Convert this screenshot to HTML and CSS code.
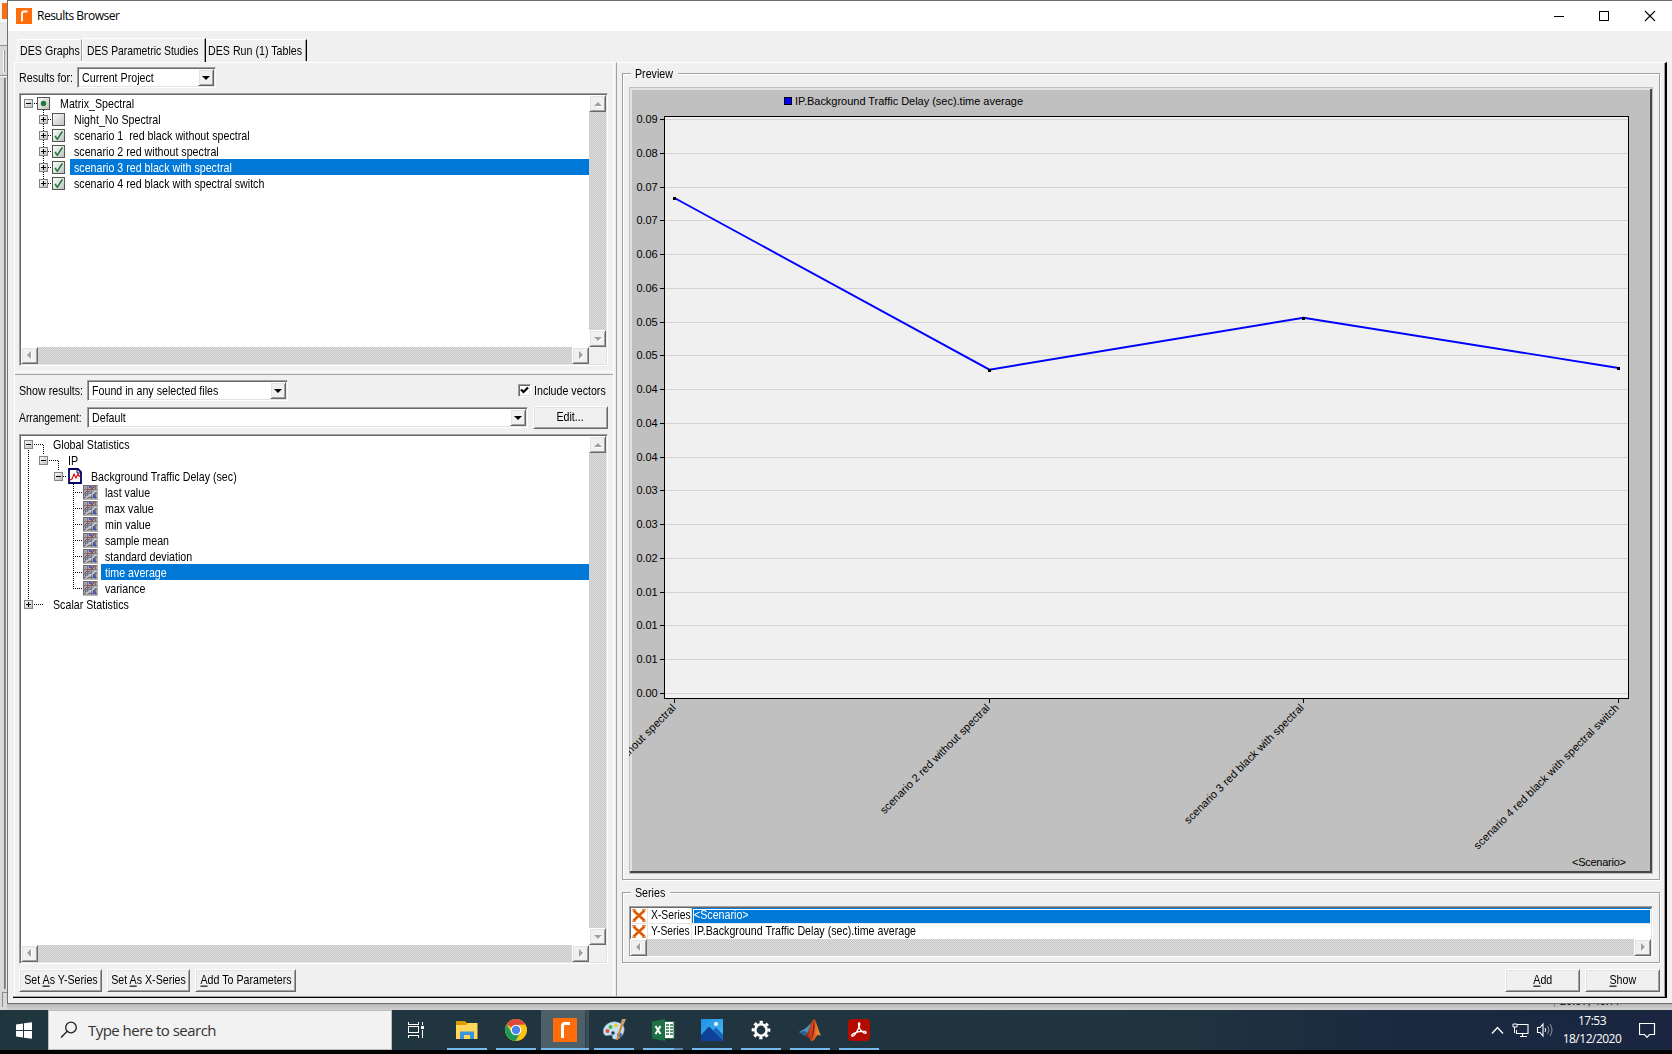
FILE: index.html
```html
<!DOCTYPE html>
<html lang="en">
<head>
<meta charset="utf-8">
<title>Results Browser</title>
<link rel="stylesheet" href="styles.css">
</head>
<body>
<svg class="defs" width="0" height="0">
  <defs>
    <linearGradient id="knob" x1="0" y1="0" x2="1" y2="1"><stop offset="0" stop-color="#fff"/><stop offset="1" stop-color="#bdbdbd"/></linearGradient>
    <linearGradient id="sky" x1="0" y1="0" x2="1" y2="1"><stop offset="0" stop-color="#1f8fe6"/><stop offset="1" stop-color="#46c0f5"/></linearGradient>
    <linearGradient id="flame" x1="0" y1="0" x2="1" y2="0"><stop offset="0" stop-color="#8a1d12"/><stop offset=".5" stop-color="#d9531e"/><stop offset="1" stop-color="#f7a13c"/></linearGradient>
    <g id="minus"><rect x=".5" y=".5" width="8" height="8" fill="url(#knob)" stroke="#848484"/><path d="M2 4.5h5" stroke="#000"/></g>
    <g id="plus"><use href="#minus"/><path d="M4.500 2v5" stroke="#000"/></g>
    <g id="box"><rect x=".5" y=".5" width="12" height="12" fill="url(#knob)" stroke="#555"/></g>
    <g id="checked"><use href="#box"/><path d="M3 7l2.300 3.200L10.300 2.500" fill="none" stroke="#1e7a3c" stroke-width="1.500"/></g>
    <g id="stat">
      <rect width="15" height="15" fill="#a3a3a8"/><path d="M0 .5h15M.5 0v15" stroke="#707070"/>
      <path d="M0 4.500h14M0 8.500h14M0 12.500h14M4.500 0v14M8.500 0v14M12.500 0v14" stroke="#74747c"/>
      <path d="M3 13L7 10L10 9L13 5" stroke="#c6c6c6" stroke-width="1.600" fill="none"/>
      <path d="M2 8L5 5L8 4L12 1" stroke="#a8444c" stroke-width="1.100" fill="none"/>
      <path d="M2 11L3 9M5 7L7 6M9 3L10 2M6 2h2M10 12h3M11 9v3" stroke="#5656b4" stroke-width="1.100"/>
      <path d="M0 14.500h15M14.500 0v15" stroke="#b4b4b4"/>
    </g>
    <g id="cross"><path d="M1.500 1.500L12.500 11.500M12.500 1.500L1.500 11.500" stroke="#e05a00" stroke-width="2.600"/><path d="M0 .8h4M10 .8h4M0 12.200h4M10 12.200h4" stroke="#e05a00" stroke-width="1"/></g>
  </defs>
</svg>
<div class="desktop">
  <div class="workspace">
    <svg class="behind" width="7" height="1010" viewBox="0 0 7 1010" shape-rendering="crispEdges">
      <rect width="7" height="1010" fill="#d8d8d8"/><rect width="7" height="22" fill="#f6f6f6"/><rect y="22" width="7" height="23" fill="#e9e9e9"/>
      <rect x="2" y="3" width="5" height="16" fill="#ff6d0a"/>
      <path d="M0 45.500h7M0 75.500h7M5.500 78v911" stroke="#8c8c8c"/><path d="M4.500 78v911" stroke="#777"/><path d="M0 76.500h7M3.500 50v22" stroke="#fafafa"/><path d="M4.500 50v22" stroke="#999"/>
      <path d="M2.500 1007V992.500H7" stroke="#8c8c8c" fill="none"/><rect x="6" y="79" width="1" height="910" fill="#eee"/>
    </svg>
    <div class="window">
      <div class="titlebar">
        <svg width="16" height="16" viewBox="0 0 16 16"><rect width="16" height="16" fill="#ff6d0a"/><path d="M6 13.500V5.500q0-2 2-2h3.500" fill="none" stroke="#fff" stroke-width="1.900"/></svg>
        <span class="title">Results Browser</span>
        <svg class="winbtns" width="103" height="12" viewBox="0 0 103 12"><path d="M0 6.500h10" stroke="#000" shape-rendering="crispEdges"/><rect x="45.500" y="1.500" width="9" height="9" fill="none" stroke="#000"/><path d="M91 1l10 10M101 1L91 11" stroke="#000" stroke-width="1.100"/></svg>
      </div>
      <div class="tabs">
        <div class="tab tab-first"><span class="t">DES Graphs</span></div>
        <div class="tab tab-active"><span class="t">DES Parametric Studies</span></div>
        <div class="tab tab-last"><span class="t">DES Run (1) Tables</span></div>
      </div>
      <div class="panes">
        <div class="left">
          <section class="sources">
            <div class="row"><span class="t label-results">Results for:</span><div class="select sel-project"><span class="t">Current Project</span><b class="drop"></b></div></div>
            <div class="treebox tree-a">
              <div class="tree">
                <svg class="guides" width="49" height="100" viewBox="21 95 49 100" shape-rendering="crispEdges">
                  <path d="M34 103.500h4M43.500 110v74M48 119.500h4M48 135.500h4M48 151.500h4M48 167.500h4M48 183.500h4" stroke="#000" stroke-dasharray="1 1"/>
                  <use href="#minus" x="24" y="99"/><use href="#box" x="37" y="97"/><circle cx="43.500" cy="103.500" r="2.700" fill="#1e7a3c" shape-rendering="auto"/>
                  <use href="#plus" x="39" y="115"/><use href="#plus" x="39" y="131"/><use href="#plus" x="39" y="147"/><use href="#plus" x="39" y="163"/><use href="#plus" x="39" y="179"/>
                  <use href="#box" x="52" y="113"/>
                  <g shape-rendering="auto"><use href="#checked" x="52" y="129"/><use href="#checked" x="52" y="145"/><use href="#checked" x="52" y="161"/><use href="#checked" x="52" y="177"/></g>
                </svg>
                <div class="node lv-root"><span class="t">Matrix_Spectral</span></div>
                <div class="node lv-scn"><span class="t">Night_No Spectral</span></div>
                <div class="node lv-scn"><span class="t">scenario 1  red black without spectral</span></div>
                <div class="node lv-scn"><span class="t">scenario 2 red without spectral</span></div>
                <div class="node lv-scn selected"><span class="t">scenario 3 red black with spectral</span></div>
                <div class="node lv-scn"><span class="t">scenario 4 red black with spectral switch</span></div>
              </div>
              <div class="vbar"><b class="sb up"></b><b class="sb down"></b></div>
              <div class="hbar"><b class="sb prev"></b><b class="sb next"></b></div>
            </div>
          </section>
          <section class="results">
            <div class="row"><span class="t label-show">Show results:</span><div class="select sel-show"><span class="t">Found in any selected files</span><b class="drop"></b></div>
              <div class="check"><svg width="13" height="13" viewBox="0 0 13 13"><path d="M3 5.500L5.500 8L10 3.500" fill="none" stroke="#000" stroke-width="2.200"/></svg></div><span class="t">Include vectors</span></div>
            <div class="row row-arr"><span class="t label-show label-arr">Arrangement:</span><div class="select sel-arr"><span class="t">Default</span><b class="drop"></b></div><div class="btn btn-edit"><span class="t">Edit...</span></div></div>
            <div class="treebox tree-b">
              <div class="tree">
                <svg class="guides" width="79" height="180" viewBox="21 436 79 180" shape-rendering="crispEdges">
                  <path d="M28.500 450v150M34 444.500h10M43.500 445v10M49 460.500h10M58.500 461v10M63 476.500h4M73.500 484v105M75 492.500h8M75 508.500h8M75 524.500h8M75 540.500h8M75 556.500h8M75 572.500h8M75 588.500h8M34 604.500h10" stroke="#000" stroke-dasharray="1 1"/>
                  <use href="#minus" x="24" y="440"/><use href="#minus" x="39" y="456"/><use href="#minus" x="54" y="472"/><use href="#plus" x="24" y="600"/>
                  <g shape-rendering="auto"><path d="M69 469h9l3 3v11H69z" fill="#fff" stroke="#000060" stroke-width="1.800"/><path d="M77 469v4h4" fill="none" stroke="#000060"/><path d="M70 480l2-1l2-5l2 4l2-4l2 3" fill="none" stroke="#e00000" stroke-width="1.100"/></g>
                  <use href="#stat" x="83" y="485"/><use href="#stat" x="83" y="501"/><use href="#stat" x="83" y="517"/><use href="#stat" x="83" y="533"/><use href="#stat" x="83" y="549"/><use href="#stat" x="83" y="565"/><use href="#stat" x="83" y="581"/>
                </svg>
                <div class="node lv-0"><span class="t">Global Statistics</span></div>
                <div class="node lv-1"><span class="t">IP</span></div>
                <div class="node lv-2"><span class="t">Background Traffic Delay (sec)</span></div>
                <div class="node lv-3"><span class="t">last value</span></div>
                <div class="node lv-3"><span class="t">max value</span></div>
                <div class="node lv-3"><span class="t">min value</span></div>
                <div class="node lv-3"><span class="t">sample mean</span></div>
                <div class="node lv-3"><span class="t">standard deviation</span></div>
                <div class="node lv-3 selected"><span class="t">time average</span></div>
                <div class="node lv-3"><span class="t">variance</span></div>
                <div class="node lv-0"><span class="t">Scalar Statistics</span></div>
              </div>
              <div class="vbar"><b class="sb up"></b><b class="sb down"></b></div>
              <div class="hbar"><b class="sb prev"></b><b class="sb next"></b></div>
            </div>
            <div class="actions">
              <div class="btn b1"><span class="t">Set <u>A</u>s Y-Series</span></div>
              <div class="btn b1"><span class="t">Set <u>A</u>s X-Series</span></div>
              <div class="btn b2"><span class="t"><u>A</u>dd To Parameters</span></div>
            </div>
          </section>
        </div>
        <div class="right">
          <div class="group preview">
            <div class="legend"><span class="t">Preview</span></div>
            <svg class="chart" width="1024" height="787" viewBox="629 87 1024 787">
              <g shape-rendering="crispEdges">
                <rect x="629" y="87" width="1024" height="787" fill="#c0c0c0"/>
                <path d="M631 873V89h1020" fill="none" stroke="#e3e3e3" stroke-width="2"/>
                <path d="M630 872h1021V89" fill="none" stroke="#484848" stroke-width="2"/>
                <rect x="664.500" y="116.500" width="964" height="582" fill="#f0f0f0" stroke="#000"/>
                <path d="M665 119.500h963M665 153.500h963M665 187.500h963M665 220.500h963M665 254.500h963M665 288.500h963M665 322.500h963M665 355.500h963M665 389.500h963M665 423.500h963M665 457.500h963M665 490.500h963M665 524.500h963M665 558.500h963M665 592.500h963M665 625.500h963M665 659.500h963M665 693.500h963" stroke="#d3d3d3"/>
                <path d="M660 119.500h4M660 153.500h4M660 187.500h4M660 220.500h4M660 254.500h4M660 288.500h4M660 322.500h4M660 355.500h4M660 389.500h4M660 423.500h4M660 457.500h4M660 490.500h4M660 524.500h4M660 558.500h4M660 592.500h4M660 625.500h4M660 659.500h4M660 693.500h4M674.500 699v4M989.500 699v4M1303.500 699v4M1618.500 699v4" stroke="#000"/>
                <rect x="784.500" y="97.500" width="7" height="7" fill="#00f" stroke="#000"/>
              </g>
              <path d="M674.500 198L989.500 369.700L1303.500 317.700L1618.500 368" fill="none" stroke="#00f" stroke-width="1.900"/>
              <path d="M673 197h3v3h-3zM988 369h3v3h-3zM1302 317h3v3h-3zM1617 367h3v3h-3z" fill="#000"/>
              <text x="795" y="105" textLength="228">IP.Background Traffic Delay (sec).time average</text>
              <g class="ylabels">
                <text x="636.500" y="123">0.09</text><text x="636.500" y="157">0.08</text><text x="636.500" y="191">0.07</text><text x="636.500" y="224">0.07</text><text x="636.500" y="258">0.06</text><text x="636.500" y="292">0.06</text><text x="636.500" y="326">0.05</text><text x="636.500" y="359">0.05</text><text x="636.500" y="393">0.04</text><text x="636.500" y="427">0.04</text><text x="636.500" y="461">0.04</text><text x="636.500" y="494">0.03</text><text x="636.500" y="528">0.03</text><text x="636.500" y="562">0.02</text><text x="636.500" y="596">0.01</text><text x="636.500" y="629">0.01</text><text x="636.500" y="663">0.01</text><text x="636.500" y="697">0.00</text>
              </g>
              <g class="xlabels">
                <text transform="translate(676.500 708.500) rotate(-45)" textLength="184">scenario 1 red black without spectral</text>
                <text transform="translate(990.500 708.500) rotate(-45)" textLength="150">scenario 2 red without spectral</text>
                <text transform="translate(1304.500 708.500) rotate(-45)" textLength="164">scenario 3 red black with spectral</text>
                <text transform="translate(1619.500 708.500) rotate(-45)" textLength="200">scenario 4 red black with spectral switch</text>
              </g>
              <text x="1572" y="866" textLength="54">&lt;Scenario&gt;</text>
            </svg>
          </div>
          <div class="group series">
            <div class="legend"><span class="t">Series</span></div>
            <div class="list">
              <div class="item"><svg width="14" height="13" viewBox="0 0 14 13"><use href="#cross"/></svg><div class="name"><span class="t">X-Series</span></div><div class="value picked"><span class="t">&lt;Scenario&gt;</span></div></div>
              <div class="item"><svg width="14" height="13" viewBox="0 0 14 13"><use href="#cross"/></svg><div class="name"><span class="t">Y-Series</span></div><div class="value"><span class="t">IP.Background Traffic Delay (sec).time average</span></div></div>
              <div class="hbar"><b class="sb prev"></b><b class="sb next"></b></div>
            </div>
          </div>
          <div class="actions actions-right">
            <div class="btn b3"><span class="t"><u>A</u>dd</span></div>
            <div class="btn b3"><span class="t"><u>S</u>how</span></div>
          </div>
        </div>
      </div>
    </div>
    <div class="statusline"><span>20.97, 40.77</span></div>
  </div>
  <div class="taskbar">
    <div class="start"><svg width="16" height="17" viewBox="0 0 16 17"><path d="M0 2.500L7 1.500V8H0zM8 1.300L16 .2V8H8zM0 9h7v6.500L0 14.500zM8 9h8v7.800L8 15.700z" fill="#fff"/></svg></div>
    <div class="search"><svg width="18" height="18" viewBox="0 0 18 18"><circle cx="11" cy="6.500" r="5.300" fill="none" stroke="#222" stroke-width="1.300"/><path d="M7.200 10.300L1 16.500" stroke="#222" stroke-width="1.400"/></svg><span>Type here to search</span></div>
    <div class="taskview"><svg width="18" height="16" viewBox="0 0 18 16" fill="none" stroke="#fff" shape-rendering="crispEdges"><path d="M.5 0v2.500h10V0M.5 16v-2.500h10V16"/><rect x=".5" y="4.500" width="10" height="6"/><path d="M14.500 0v3M14.500 8v8"/><rect x="13" y="4" width="3" height="3" fill="#fff" stroke="none"/></svg></div>
    <div class="apps">
      <div class="app"><svg width="24" height="24" viewBox="0 0 24 24"><path d="M1 3h9l2 2h10v4H1z" fill="#d99a00"/><path d="M1 7h10l2-2h9.500v16H1z" fill="#ffd65c"/><path d="M5 21v-7.500h14V21h-4v-4H9v4z" fill="#3a94dc"/></svg></div>
      <div class="app"><svg width="24" height="24" viewBox="0 0 24 24"><circle cx="12" cy="12" r="11" fill="#fbc315"/><path d="M12 12L2.500 6.500A11 11 0 0 1 21.500 6.500L12 7z" fill="#dc4a3e"/><path d="M2.500 6.500A11 11 0 0 0 11.500 23L16.300 14.500L12 17L7.700 14.500z" fill="#1c9b57"/><circle cx="12" cy="12" r="5.300" fill="#fff"/><circle cx="12" cy="12" r="4.200" fill="#4a84ee"/></svg></div>
      <div class="app active"><svg width="24" height="24" viewBox="0 0 24 24"><rect width="24" height="24" fill="#ff6d0a"/><path d="M9.500 20V8q0-2.500 2.500-2.500h5" fill="none" stroke="#fff" stroke-width="3"/></svg></div>
      <div class="app"><svg width="24" height="24" viewBox="0 0 24 24"><path d="M1.500 15C0 8 8 3 14 4s9 4 8 9-5 9-10 8c-3-.5 0-4-3-4s-6 2-7.500-2z" fill="#c4e2f4" stroke="#84b3d0" stroke-width=".6"/><circle cx="5.500" cy="13" r="2" fill="#e05234"/><circle cx="8.500" cy="9" r="2" fill="#58b445"/><circle cx="14" cy="7.500" r="2" fill="#f4c830"/><circle cx="11" cy="15" r="1.700" fill="#203a46"/><circle cx="17.500" cy="17" r="2.400" fill="#3262b8"/><path d="M14 22l5-16 2 1-5 15z" fill="#d98533"/><path d="M18.500 6L20 1l4 0-2.500 6z" fill="#c5a17c"/></svg></div>
      <div class="app excel"><svg width="24" height="24" viewBox="0 0 24 24"><rect x="12" y="3.500" width="11" height="17" fill="#fff" stroke="#207346"/><path d="M15 7h7M15 10h7M15 13h7M15 16h7" stroke="#207346" stroke-width="1.500"/><path d="M18.500 5v14" stroke="#fff"/><path d="M1 3.500L14 1v22L1 20.500z" fill="#1e7145"/><path d="M4.500 8l5 8M9.500 8l-5 8" stroke="#fff" stroke-width="2"/></svg></div>
      <div class="app"><svg width="24" height="24" viewBox="0 0 24 24"><rect x="1" y="1" width="22" height="22" fill="url(#sky)"/><path d="M1 17L9 8.500L23 22v1H1z" fill="#0e4296"/><path d="M13 12l3-2.500 7 7V23z" fill="#1a63bb"/><circle cx="16" cy="6" r="2" fill="#fff"/></svg></div>
      <div class="app"><svg width="24" height="24" viewBox="0 0 24 24"><circle cx="12" cy="12" r="5.700" fill="none" stroke="#fff" stroke-width="2.600"/><circle cx="12" cy="12" r="8" fill="none" stroke="#fff" stroke-width="2.700" stroke-dasharray="3.140 3.140" transform="rotate(-11 12 12)"/></svg></div>
      <div class="app"><svg width="24" height="24" viewBox="0 0 24 24"><path d="M1 14l7-4 5-5-2 9-4 4z" fill="#4b93c8"/><path d="M1 14l6 4 2-3-2-2z" fill="#2a5f92"/><path d="M7 18c4-3 6-16 9-17 2 1 5 13 7 17-3-2-4-1-5 1-2 4-3 4-5 4-1-2-3-5-6-5z" fill="url(#flame)"/><path d="M16 1c-1 5-1 14-3 21 2-2 5-13 3-21z" fill="#8a1d12"/></svg></div>
      <div class="app"><svg width="24" height="24" viewBox="0 0 24 24"><rect x="1" y="1" width="22" height="22" rx="4" fill="#b30b00"/><path d="M5 18c-2-2 6-5 13-4.500 2 .5 1 2.500-1 1.500-3-2-5.500-6-5.500-9 0-2 2-1.500 1 1.500C11.500 11 8 18 5.500 18z" fill="none" stroke="#fff" stroke-width="1.300"/></svg></div>
    </div>
    <div class="tray">
      <svg class="tray-icons" width="64" height="16" viewBox="0 0 64 16" fill="none" stroke="#fff">
        <path d="M2 11.500L7.500 5.500L13 11.500" stroke-width="1.300"/>
        <path d="M27 2.500h11v9H26.500V8M30 14.500h7M32.500 12v2" stroke-width="1.100"/><path d="M23 2h4v3h-4zM24.500 5v6" />
        <path d="M47.500 5.500h2.500l3-3.500v12l-3-3.500h-2.500z" stroke-width="1.100"/><path d="M55 6q1.500 2 0 4"/><path d="M57.500 4q3 4 0 8M60 2q4 6 0 12" stroke="#8b95a3"/>
      </svg>
      <div class="clock"><span>17:53</span><span>18/12/2020</span></div>
      <svg width="17" height="17" viewBox="0 0 17 17"><path d="M.5 1.500h15v11h-5l-2.500 2.800L5.500 12.500h-5z" fill="none" stroke="#fff" stroke-width="1.200"/></svg>
    </div>
  </div>
</div>
</body>
</html>
```
FILE: styles.css
```css
* { box-sizing: border-box; }
body { margin: 0; background: #000; color: #000; font: 11px/16px "Liberation Sans", Arial, sans-serif; overflow: hidden; }
svg { display: block; flex: none; }
.defs { position: absolute; }
.desktop { width: 1672px; height: 1054px; display: flex; flex-direction: column; }
.workspace { height: 1010px; display: grid; grid-template-columns: 7px 1fr; grid-template-rows: 1004px 6px; background: linear-gradient(#b5b5b5, #d2d2d2) bottom / 100% 6px no-repeat; }
.behind { grid-row: 1 / 3; }
.window { background: #f0f0f0; border: 1px solid #707070; border-right: 0; display: flex; flex-direction: column; min-width: 0; }
.statusline { display: flex; overflow: hidden; height: 3px; margin-left: 1547px; border-left: 1px solid #888; padding-left: 5px; line-height: 0; }
.statusline span { margin-top: -3px; }

/* condensed dialog lettering */
.t { display: inline-block; white-space: pre; transform: scale(.97, 1.12); transform-origin: 0 50%; flex: none; }

.titlebar { height: 30px; background: #fff; display: flex; align-items: center; padding: 0 15px 1px 8px; flex: none; }
.title { font: 12px/16px "Open Sans", "Noto Sans", sans-serif; margin-left: 5px; letter-spacing: -.5px; }
.winbtns { margin-left: auto; }

.tabs { display: flex; height: 31px; padding: 8px 0 0 9px; flex: none; }
.tab { display: flex; align-items: center; height: 22px; border-top: 1px solid #fff; }
.tab-first { width: 65px; border-left: 1px solid #fff; border-right: 1px solid #a0a0a0; padding-left: 2px; border-top-left-radius: 2px; }
.tab-active { width: 124px; height: 24px; margin-top: -1px; padding-left: 4px; border-left: 1px solid #fff; border-right: 1px solid #000; box-shadow: inset -1px 0 #a0a0a0; }
.tab-active .t { transform: scale(.94, 1.12); }
.tab-last { width: 101px; padding-left: 2px; border-right: 1px solid #000; box-shadow: inset -1px 0 #a0a0a0; }

.panes { display: flex; gap: 2px; margin-left: 5px; width: 1654px; height: 936px; border-bottom: 1px solid #000; padding-left: 1px; box-shadow: inset 0 -1px #a0a0a0; }
.left { width: 600px; height: 934px; border: 1px solid #fff; border-bottom: 0; }
.right { flex: 1; height: 935px; border-top: 1px solid #fff; border-left: 1px solid #a0a0a0; border-right: 2px solid #000; box-shadow: inset -1px 0 #a0a0a0; padding: 10px 0 0 5px; }

.sources { height: 309px; padding: 4px 0 0 4px; border-bottom: 1px solid #fff; }
.results { margin-top: 2px; border-top: 1px solid #a0a0a0; padding: 5px 0 0 4px; }
.row { display: flex; align-items: center; height: 21px; margin-bottom: 5px; }
.row-arr { height: 23px; margin: 5px 0; }
.label-results { width: 58px; }
.label-show { width: 68px; }
.label-arr { transform: scale(.94, 1.12); }
.select, .treebox, .check, .list { background: #fff; border: 1px solid; border-color: #a0a0a0 #fff #fff #a0a0a0; box-shadow: inset 1px 1px #696969, inset -1px -1px #e3e3e3; padding: 1px; }
.select { display: flex; height: 21px; align-items: center; padding-left: 3.500px; }
.drop { margin-left: auto; width: 16px; height: 17px; position: relative; }
.drop, .sb, .btn { background: #f0f0f0; border: 1px solid; border-color: #fff #696969 #696969 #fff; box-shadow: inset 1px 1px #e3e3e3, inset -1px -1px #a0a0a0; }
.drop::after { content: ""; position: absolute; left: 3px; top: 6px; border: 4px solid transparent; border-width: 4px 4px 0; border-top-color: #000; }
.sel-project { width: 139px; }
.sel-show { width: 201px; }
.sel-arr { width: 441px; margin-right: 5px; }
.check { width: 13px; height: 13px; padding: 0; margin: 0 3px 0 230px; display: flex; }
.check svg { margin: -1px; }
.btn { height: 23px; display: flex; align-items: center; justify-content: center; padding-bottom: 1px; }
.btn .t { transform-origin: 50% 50%; }
.btn-edit { width: 75px; }
.actions { display: flex; gap: 5px; margin-top: 5px; }
.b1 { width: 83px; }
.b2 { width: 101px; }
.b3 { width: 75px; }
.actions-right { justify-content: flex-end; gap: 5px; margin: 6px 5px 0 0; }

.treebox { width: 589px; display: grid; grid-template-columns: 568px 17px; grid-template-rows: 1fr 17px; background: linear-gradient(#f0f0f0, #f0f0f0) right 1px bottom 1px / 17px 17px no-repeat #fff; }
.tree-a { height: 273px; }
.tree-b { height: 530px; }
.tree { position: relative; }
.guides { position: absolute; left: 0; top: 0; }
.node { height: 16px; display: flex; align-items: center; padding-top: 1px; }
.lv-root { padding-left: 39px; }
.lv-scn { margin-left: 49px; padding-left: 4px; }
.lv-0 { padding-left: 32px; }
.lv-1 { padding-left: 47px; }
.lv-2 { padding-left: 70px; }
.lv-3 { margin-left: 80px; padding-left: 4px; }
.selected, .picked { background: #0078d7; color: #fff; }
.vbar, .hbar { display: flex; justify-content: space-between; background: repeating-conic-gradient(#c6c6c6 0 25%, #dfdfdf 0 50%) 0 0 / 2px 2px; }
.vbar { flex-direction: column; }
.sb { width: 17px; height: 17px; display: flex; align-items: center; justify-content: center; }
.sb::after { content: ""; border: 4px solid transparent; filter: drop-shadow(1px 1px 0 #fff); }
.up::after { border-width: 0 4px 4px; border-bottom-color: #a0a0a0; }
.down::after { border-width: 4px 4px 0; border-top-color: #a0a0a0; }
.prev::after { border-width: 4px 4px 4px 0; border-right-color: #a0a0a0; margin: 0 2px 1px 0; }
.next::after { border-width: 4px 0 4px 4px; border-left-color: #a0a0a0; margin-bottom: 1px; }

.group { width: 1038px; border: 1px solid #a0a0a0; box-shadow: inset 1px 1px #fff, 1px 1px #fff; }
.preview { height: 807px; }
.series { height: 71px; margin-top: 12px; }
.legend { width: max-content; height: 14px; margin: -7px 0 6px 8px; padding: 0 4px; background: #f0f0f0; line-height: 14px; }
.chart { margin-left: 6px; overflow: hidden; }
.chart text { font-size: 11px; }
.ylabels text { letter-spacing: -.1px; }
.xlabels text { text-anchor: end; }
.list { width: 1024px; height: 51px; margin-left: 6px; overflow: hidden; }
.list .hbar { margin: 0 0 0 -1px; }
.item { display: flex; height: 16px; align-items: center; padding-left: 1px; border-bottom: 1px solid #e3e3e3; }
.item + .item { height: 15px; border-bottom: 0; }
.item .name { width: 45px; margin-left: 1px; padding-left: 3px; border-left: 1px solid #e3e3e3; border-right: 1px solid #e3e3e3; height: 15px; line-height: 15px; }
.item .name .t { transform: scale(.94, 1.12); }
.item .value { flex: 1; height: 15px; line-height: 15px; padding-left: 2px; }
.item .picked { box-shadow: inset 1px 1px #0078d7, inset 2px 2px #fff, inset -1px 0 #fff; }

.taskbar { height: 40px; display: flex; align-items: center; color: #fff; background: linear-gradient(90deg, #20363f, #20343f 70%, #1a2840 85%, #1a2640); }
.start { width: 48px; padding-left: 16px; }
.search { width: 344px; height: 40px; background: #f2f2f2; border: 1px solid #bbb; display: flex; align-items: center; padding-left: 11px; color: #333; font: 15px/20px "Open Sans", "Noto Sans", sans-serif; }
.search span { margin-left: 10px; letter-spacing: -.53px; }
.taskview { width: 51px; padding-left: 16px; }
.apps { display: flex; gap: 1px; }
.app { width: 48px; height: 40px; display: flex; align-items: center; justify-content: center; background: linear-gradient(#76b9ed, #76b9ed) 4px 100% / 40px 2px no-repeat; }
.app.active { background: linear-gradient(#76b9ed, #76b9ed) 0 100% / 48px 2px no-repeat, linear-gradient(90deg, #4d5f68 44px, #2c3d46 44px, #3d4f58 46px); }
.app.excel { background: linear-gradient(90deg, #76b9ed 31px, #5a87ab 31px) 4px 100% / 40px 2px no-repeat; }
.tray { margin-left: auto; margin-right: 16px; display: flex; align-items: center; }
.tray-icons { margin-right: 8px; }
.clock { width: 60px; margin-right: 17px; display: flex; flex-direction: column; align-items: center; font: 12px/18px "Open Sans", "Noto Sans", sans-serif; letter-spacing: -.5px; }
```
